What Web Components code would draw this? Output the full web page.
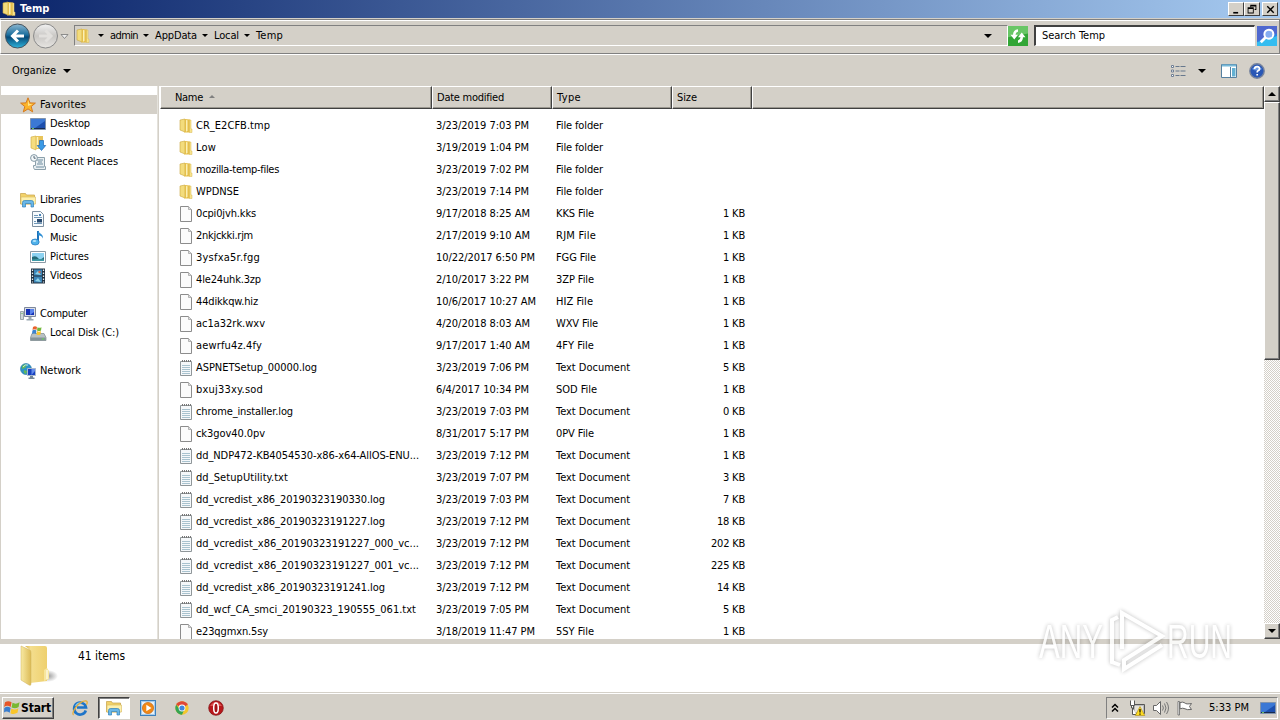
<!DOCTYPE html>
<html lang="en">
<head>
<meta charset="utf-8">
<title>Temp</title>
<style>
  html, body { margin: 0; height: 100%; overflow: hidden; }
  body {
    --face: #d4d0c8;
    --shade: #808080;
    --dark: #404040;
    font-family: 'DejaVu Sans Condensed', 'DejaVu Sans', sans-serif;
    font-stretch: condensed;
    font-size: 11px;
    color: #000;
    background: var(--face);
  }
</style>
</head>
<body>
<explorer-window></explorer-window>
<script>
const ICONS = {
  folder: `<path d="M2 2l5-1v13l-5-2z" fill="#f3dc7c" stroke="#c9a63c" stroke-width=".6"/><path d="M7 1l5 .5v13H6l1-2z" fill="#e5bf4b"/><path d="M8 2l1.5.3v10L8 14z" fill="#fbf0b4"/><path d="M11.500 2h1.500v9h1v3.500h-2.500z" fill="#f7e38d" stroke="#d9b854" stroke-width=".5"/>`,
  file: `<path d="M2.500.500h8l3 3v12h-11z" fill="#fbfbfb" stroke="#8c8c8c"/><path d="M10.500.500v3h3" fill="#ddd" stroke="#a5a5a5" stroke-width=".8"/>`,
  text: `<path d="M2.500 1.500h11v14h-11z" fill="#f5f8fa" stroke="#8f9699"/><path d="M4 1h9" stroke="#777" stroke-width="2" stroke-dasharray="1 1"/><path d="M4 5.500h8M4 7.500h8M4 9.500h8M4 11.500h8M4 13.500h8" stroke="#a9c3cf"/>`,
  star: `<path d="M8 .8l2 5.100 5.400.200-4.200 3.400 1.500 5.400L8 11.900l-4.700 3 1.500-5.400L.6 6.100 6 5.900z" fill="#fcb42b" stroke="#d57a20"/><path d="M8 3l1.200 4 3.300.200L8 9z" fill="#ffe58b"/>`,
  desktop: `<path d="M.5 2.500h15v11H.5z" fill="#1c4fae" stroke="#7f93ad"/><path d="M1 3h14v2L5 12H1z" fill="#3b78d5"/><path d="M1 12.500h14" stroke="#172b50"/><path d="M2 12.500h2" stroke="#6ac15c"/>`,
  downloads: `<path d="M1 2l5-1v14l-5-2z" fill="#f6dd7f" stroke="#cda83e" stroke-width=".6"/><path d="M6 1h7v13H6z" fill="#e8c45b"/><path d="M7.500 2v11" stroke="#fff3b8" stroke-width="1.500"/><path d="M9.500 5.500h4v5h2.200L11.500 15.500 7.200 10.500h2.300z" fill="#3a9ae6" stroke="#1c66b4" stroke-width=".7"/>`,
  recent: `<path d="M5.500 3.500h9v9h1v3H4.500l-1-2v-2h2z" fill="#e8eef1" stroke="#8ca0ab"/><path d="M7 6h6M8 8h4M7 10h6M6 13h8" stroke="#6f8da0"/><circle cx="4" cy="4" r="3.400" fill="#f4f8fa" stroke="#8499a5"/><path d="M4 2v2.200h1.700" fill="none" stroke="#526675"/>`,
  libraries: `<path d="M.5 3V1.500h5l1 1.500h8v9H.500z" fill="#f2d26a" stroke="#c6a147" stroke-width=".7"/><path d="M1 5h14.500v7H1z" fill="#fdf0ad" stroke="#d7b95c" stroke-width=".6"/><path d="M2.500 15v-4.500q0-2 2-2h7q2 0 2 2V15H11v-3.500H5.500V15z" fill="#6ab7e8" stroke="#2f7fb9" stroke-width=".7"/>`,
  documents: `<path d="M2.500.500h8l3 3v12h-11z" fill="#f6fafd" stroke="#7d8fa0"/><path d="M4 4.500h4M4 6.500h8M4 12.500h8M4 10.500h2" stroke="#6f97b8"/><path d="M7 8h5v3.500H7z" fill="#27496f"/><path d="M9 3h2v2H9z" fill="#4b83b8"/>`,
  music: `<path d="M8 1v11" stroke="#1d72ba" stroke-width="2"/><path d="M8 .5c1 3 5.500 3.500 5 8-1-2.500-3-3-5-3z" fill="#2d8ed4"/><ellipse cx="5.200" cy="12" rx="4" ry="3" fill="#50b2ea" stroke="#1d72ba" stroke-width=".7"/><ellipse cx="4.500" cy="11" rx="1.800" ry="1" fill="#b4e3fa"/>`,
  pictures: `<path d="M.5 2.500h15v11H.500z" fill="#fff" stroke="#8b9aa5"/><path d="M2 4h12v8H2z" fill="#8dd2f1"/><path d="M2 8q4-2 6 1t6-1v4H2z" fill="#246b78"/><path d="M2 10.500q6-1 12 0V12H2z" fill="#3f9ba7"/>`,
  videos: `<path d="M1 .5h14v15H1z" fill="#20303f"/><path d="M2.500 1.500v13M13.500 1.500v13" stroke="#e7eef3" stroke-width="1.300" stroke-dasharray="1.500 1.500"/><path d="M4 1.500h8v6H4zM4 8.500h8v6H4z" fill="#3d86b9"/><path d="M5 6l3-3 3 4zM5 13l3-3 3 4z" fill="#8fd3e8"/><circle cx="9.500" cy="4" r="1.200" fill="#d16b4d"/>`,
  computer: `<path d="M.5 5.500h3v8h-3z" fill="#d0d7d9" stroke="#87969c" stroke-width=".8"/><path d="M1.500 7.500h1" stroke="#55b34a"/><path d="M4.500 1.500h11v9h-11z" fill="#d9dee7" stroke="#7d879b"/><path d="M6 3h8v6H6z" fill="#1531b6"/><path d="M10 3h4v3L10 9z" fill="#5a83ec"/><path d="M8.500 11h3v2h2v1.500h-7V13h2z" fill="#9aa8b2"/>`,
  disk: `<path d="M2 8.500h12l2 4v3H.500v-3z" fill="#b9c1c4" stroke="#7c888d" stroke-width=".7"/><path d="M.7 12.500h15v3H.700z" fill="#859399"/><path d="M12 14h2" stroke="#5ee04e"/><path d="M3 2q2-1.500 4 0L6.500 5q-2-1.500-4 0z" fill="#e9622c"/><path d="M7.500 2.200q2 1.300 4 0L11 5.400q-2 1.200-4 0z" fill="#72b83a"/><path d="M2.400 5.600q2-1.500 4 0L6 9q-2-1.500-4 0z" fill="#3a83d0"/><path d="M7 6q2 1.300 4 0l-.5 3.400q-2 1.200-4 0z" fill="#f7c52d"/>`,
  network: `<circle cx="6" cy="6" r="5.500" fill="#2d93c9" stroke="#23749d" stroke-width=".6"/><path d="M2 3q3-3 5-1L5 5 2 6zM4 7l3 1-1 3q-3-1-2-4z" fill="#63b85b"/><path d="M3 4q2-3 5-2" stroke="#bfe8f6" fill="none"/><path d="M7.500 5.500h8v7h-8z" fill="#1740c0" stroke="#a9b8cc"/><path d="M11.500 6h3.500v2l-3.500 4z" fill="#648deb"/><path d="M10 13h3v1.500h1.500V16h-6v-1.500H10z" fill="#758796"/>`,
  views: `<path d="M1.500 2.500h2v2h-2zM1.500 7h2v2h-2zM1.500 11.500h2v2h-2z" fill="#fff" stroke="#6e7e94"/><path d="M5.500 3.500h4m1 0h5M5.500 8h4m1 0h5M5.500 12.500h4m1 0h5" stroke="#67788d"/>`,
  pane: `<path d="M.5 1.500h15v13H.500z" fill="#fff" stroke="#5580a0"/><path d="M1 2.500h14" stroke="#77b9d8" stroke-width="2"/><path d="M9.500 4v10" stroke="#5580a0"/><path d="M11 5h3.500v8.500H11z" fill="#62b0d2"/>`,
  help: `<circle cx="8" cy="8" r="7.200" fill="#2957b6" stroke="#76839d" stroke-width="1.400"/><path d="M3 6q5-6 10 0-5 3-10 0z" fill="#6c9ae2"/><path d="M5.500 6q.3-2.400 2.700-2.300 2.500.2 2.300 2.300-.2 1.200-1.500 1.800-.9.500-.8 1.700M8.200 11v1.600" fill="none" stroke="#fff" stroke-width="1.700"/>`,
  search: `<rect width="16" height="16" fill="#2b83e4"/><path d="M0 0h16v6L0 12z" fill="#4f68cf"/><path d="M0 16v-3l16-5v8z" fill="#35bdf0"/><circle cx="9.500" cy="6.500" r="3.600" fill="#86adf1" stroke="#fff" stroke-width="1.600"/><path d="M7 9l-4 4" stroke="#fff" stroke-width="2.200"/>`,
  refresh: `<rect width="16" height="16" fill="#32a636"/><path d="M0 0h16v6L0 9z" fill="#68c666"/><path d="M2 7h2q0-4 4-4.500v2q-2 .5-2 2.500h2l-3 3.800zM14 9h-2q0 4-4 4.500v-2q2-.5 2-2.500H8l3-3.800z" fill="#fff"/>`,
  flag: `<path d="M0 2.500q3.500-2.500 7 0L6 7.400q-3.500-2.500-7 0z" fill="#e75527"/><path d="M8 3q3.500 2 7.500-.500l-1 5q-3.500 2.400-7.500.500z" fill="#78b833"/><path d="M-.8 8.500q3.500-2.500 6.800 0l-1 5q-3.500-2.500-6-.300z" fill="#397dce"/><path d="M6.800 9q3.500 2.200 7.500-.300l-1 5q-4 2.300-7.500.300z" fill="#f9c52b"/>`,
  ie: `<path d="M13.800 10.500A6 6 0 1 1 14 7.500H5" fill="none" stroke="#1d74c8" stroke-width="2.600"/><path d="M3.500 6q2-3.600 6-3" fill="none" stroke="#7fc6f3" stroke-width="1.200"/><path d="M1.500 15C-1.500 13 7 .500 14 .800q2.200.500.500 4" fill="none" stroke="#e6ad34" stroke-width="1.300"/>`,
  wmp: `<rect x=".5" y=".5" width="15" height="15" fill="#a9cdeb" stroke="#3c80bd"/><rect x="2" y="2" width="12" height="12" fill="#e6f1f9"/><circle cx="8" cy="8" r="5.600" fill="#f18816" stroke="#c96812" stroke-width=".7"/><path d="M6.300 4.700L11.500 8l-5.200 3.300z" fill="#fff"/>`,
  chrome: `<circle cx="8" cy="8" r="6.700" fill="#f3c62d"/><path d="M8 8L2.200 4.700A6.700 6.700 0 0 1 13.800 4.700z" fill="#de4638"/><path d="M2.200 4.700A6.700 6.700 0 0 0 8 14.700L10.500 9 5.500 9z" fill="#35a454"/><circle cx="8" cy="8" r="3.400" fill="#fff"/><circle cx="8" cy="8" r="2.600" fill="#4285dc"/>`,
  opera: `<circle cx="8" cy="8" r="7.300" fill="#b8171b" stroke="#7e1012" stroke-width=".7"/><path d="M2 6q6-8 12 0z" fill="#dd5551"/><ellipse cx="8" cy="8" rx="2.300" ry="5" fill="#a31114" stroke="#fff" stroke-width="1.500"/>`,
  chevrons: `<path d="M5 7.500l3-3 3 3M5 11.500l3-3 3 3" fill="none" stroke="#000" stroke-width="1.500"/>`,
  lan: `<path d="M4.500 4.500h11v9h-11z" fill="#b9b9b9" stroke="#555"/><path d="M6 6h8v6H6z" fill="#e5e2da"/><path d="M1.500.500v5h4v-5M2.500 6v2h2V6M3.500 8v6.500h4" fill="#fff" stroke="#555"/><path d="M11 6.500l4.800 9H6.300z" fill="#ffdc22" stroke="#a98a12" stroke-width=".6"/><path d="M11 9v3.500M11 13.500v1.200" stroke="#000" stroke-width="1.200"/>`,
  sound: `<path d="M.5 5.500h3l4-4v13l-4-4h-3z" fill="#fff" stroke="#666"/><path d="M9.500 5.500q1.800 2.500 0 5M11.500 3.500q3 4.500 0 9M13.500 2q4 6 0 12" fill="none" stroke="#777"/>`,
  action: `<path d="M1 1.500h1.500V15H1z" fill="#fff" stroke="#666" stroke-width=".8"/><path d="M3 2.500q3-1 5 .500 1 1.500 6.500.500l-2 3 2 3q-5 .600-6.500-.700-2-1.200-5 0z" fill="#fff" stroke="#666"/>`,
  min: `<path d="M4 11h6v2H4z"/>`,
  restore: `<path d="M6 3h7v6h-2V8h1V5H7v1H6z"/><path d="M3 6h7v7H3zM4 8v4h5V8z" fill-rule="evenodd"/>`,
  close: `<path d="M4 4l8 8M12 4l-8 8" stroke="#000" stroke-width="1.700"/>`,
};

/* base: clones a template into an open shadow root */
class BaseElement extends HTMLElement {
  connectedCallback() {
    if (this.shadowRoot) return;
    const t = document.createElement('template');
    t.innerHTML = this.render();
    this.attachShadow({ mode: 'open' }).appendChild(t.content.cloneNode(true));
  }
}

class WinIcon extends BaseElement {
  render() {
    const s = this.getAttribute('size') || 16;
    return `
      <style>
        :host { display: block; flex: none; width: ${s}px; height: ${s}px; }
        svg { display: block; overflow: visible; }
      </style>
      <svg width="${s}" height="${s}" viewBox="0 0 16 16">${ICONS[this.getAttribute('name')]}</svg>
    `;
  }
}
customElements.define('win-icon', WinIcon);

/* label whose tracking is adjusted so that it is exactly `w` pixels wide */
class UiLabel extends BaseElement {
  render() {
    return `
      <style>
        :host { display: block; flex: none; white-space: nowrap; line-height: 14px; }
        span { display: inline-block; }
      </style>
      <span><slot></slot></span>
    `;
  }
  connectedCallback() {
    super.connectedCallback();
    const w = Number(this.getAttribute('w'));
    if (!w) return;
    const span = this.shadowRoot.querySelector('span');
    const gap = (w - span.getBoundingClientRect().width) / this.textContent.length;
    span.style.letterSpacing = gap.toFixed(3) + 'px';
  }
}
customElements.define('ui-label', UiLabel);

class DropArrow extends BaseElement {
  render() {
    const s = Number(this.getAttribute('size') || 3);
    return `
      <style>
        :host {
          display: block; flex: none; width: 0; height: 0;
          border: ${s}px solid transparent; border-bottom: 0;
          border-top-color: var(--arrow, #000);
        }
        :host([up]) { border-top: 0; border-bottom: ${s}px solid var(--arrow, #000); }
      </style>
    `;
  }
}
customElements.define('drop-arrow', DropArrow);

class TitleBar extends BaseElement {
  render() {
    return `
      <style>
        :host {
          display: flex; align-items: center; height: 18px; flex: none;
          background: linear-gradient(90deg, #0a246a, #a6caf0);
          color: #fff; font-weight: bold; padding: 0 2px 0 1px;
        }
        ui-label { margin-left: 3px; flex: 1; }
        .btn {
          width: 16px; height: 14px; box-sizing: border-box; background: var(--face);
          border: 1px solid; border-color: #fff var(--dark) var(--dark) #fff;
          display: flex; align-items: center; justify-content: center;
        }
        .btn:last-child { margin-left: 2px; }
      </style>
      <win-icon name="folder"></win-icon>
      <ui-label w="31"><slot></slot></ui-label>
      <div class="btn"><win-icon name="min" size="13"></win-icon></div>
      <div class="btn"><win-icon name="restore" size="14"></win-icon></div>
      <div class="btn"><win-icon name="close" size="13"></win-icon></div>
    `;
  }
  connectedCallback() {
    super.connectedCallback();
  }
}
customElements.define('title-bar', TitleBar);

class NavBar extends BaseElement {
  render() {
    const crumbs = [['admin', 28, 5], ['AppData', 42, 5], ['Local', 25, 5], ['Temp', 27, 5]];
    return `
      <style>
        :host {
          display: flex; align-items: center; height: 35px; flex: none; box-sizing: border-box;
          margin-top: 1px; padding: 0 2px 2px 4px;
          border: 1px solid; border-color: #808080 #808080 #808080 #fff;
          box-shadow: inset 0 1px #fff;
        }
        .hist { flex: none; display: block; }
        drop-arrow { --arrow: #000; }
        .address, .search {
          height: 21px; box-sizing: border-box; display: flex; align-items: center;
          border: 1px solid; border-color: var(--shade) #fff #fff var(--shade);
        }
        .address { flex: 1; margin-left: 5px; padding-left: 0; }
        .crumb { display: flex; align-items: center; gap: 6px; margin-left: 5px; }
        .crumb:first-of-type { margin-left: 7px; }
        .address > .end { margin-left: auto; margin-right: 10px; }
        .refresh { display: flex; margin-right: 5px; }
        .search {
          width: 221px; background: #fff; padding-left: 6px;
          border: 2px solid; border-color: var(--dark) #fff #fff var(--dark);
          border-bottom-width: 1px; border-right-width: 1px;
        }
        .go { margin-left: 2px; }
      </style>
      <svg class="hist" width="64" height="28" viewBox="0 0 64 28">
        <defs>
          <linearGradient id="b" x2="0" y2="1"><stop stop-color="#8db7d0"/><stop offset=".45" stop-color="#1c6f9e"/><stop offset=".55" stop-color="#064b79"/><stop offset="1" stop-color="#2fb5dd"/></linearGradient>
          <linearGradient id="g" x2="0" y2="1"><stop stop-color="#f2f2f2"/><stop offset=".5" stop-color="#c9c7c4"/><stop offset="1" stop-color="#e8e6e2"/></linearGradient>
        </defs>
        <circle cx="12.500" cy="14" r="12" fill="url(#b)" stroke="#47545f"/>
        <path d="M19 14H8M13 8.500L7.500 14l5.500 5.500" fill="none" stroke="#fff" stroke-width="3"/>
        <circle cx="40.500" cy="14" r="12" fill="url(#g)" stroke="#8a8a8a"/>
        <path d="M34 14h11M40.500 8.500L46 14l-5.500 5.500" fill="none" stroke="#e2e0dd" stroke-width="3"/>
        <path d="M56 12.500h7l-3.500 4z" fill="#eee" stroke="#777" stroke-width=".8"/>
      </svg>
      <div class="address">
        <win-icon name="folder"></win-icon>
        ${crumbs.map(([t, w]) => `<div class="crumb"><drop-arrow></drop-arrow><ui-label w="${w}">${t}</ui-label></div>`).join('')}
        <drop-arrow class="end" size="4"></drop-arrow>
        <div class="refresh"></div>
      </div>
      <win-icon name="refresh" size="20"></win-icon>
      <div style="width:6px"></div>
      <div class="search"><ui-label w="63">Search Temp</ui-label></div>
      <win-icon class="go" name="search" size="20"></win-icon>
    `;
  }
}
customElements.define('nav-bar', NavBar);

class CommandBar extends BaseElement {
  render() {
    return `
      <style>
        :host {
          display: flex; align-items: center; height: 32px; flex: none; box-sizing: border-box;
          padding: 0 15px 0 12px; border-top: 1px solid #fff;
        }
        .menu { display: flex; align-items: center; gap: 7px; flex: 1; }
        .tools { display: flex; align-items: center; }
        .tools win-icon:nth-of-type(2) { margin: 0 12px 0 15px; }
        .tools drop-arrow { margin-left: 12px; }
      </style>
      <div class="menu"><ui-label w="44">Organize</ui-label><drop-arrow size="4"></drop-arrow></div>
      <div class="tools">
        <win-icon name="views"></win-icon>
        <drop-arrow size="4"></drop-arrow>
        <win-icon name="pane"></win-icon>
        <win-icon name="help"></win-icon>
      </div>
    `;
  }
}
customElements.define('command-bar', CommandBar);

class NavItem extends BaseElement {
  render() {
    return `
      <style>
        :host { display: flex; align-items: center; gap: 4px; height: 19px; padding-left: 29px; }
        :host([root]) { padding-left: 19px; }
        :host([selected]) { background: var(--face); }
      </style>
      <win-icon name="${this.getAttribute('icon')}"></win-icon>
      <ui-label w="${this.getAttribute('w')}">${this.getAttribute('label')}</ui-label>
    `;
  }
}
customElements.define('nav-item', NavItem);

class NavTree extends BaseElement {
  render() {
    const groups = [
      [['star', 'Favorites', 46], ['desktop', 'Desktop', 40], ['downloads', 'Downloads', 53], ['recent', 'Recent Places', 68]],
      [['libraries', 'Libraries', 41], ['documents', 'Documents', 54], ['music', 'Music', 27], ['pictures', 'Pictures', 39], ['videos', 'Videos', 32]],
      [['computer', 'Computer', 47], ['disk', 'Local Disk (C:)', 69]],
      [['network', 'Network', 41]],
    ];
    return `
      <style>
        :host {
          display: flex; flex-direction: column; gap: 19px; width: 157px; flex: none;
          box-sizing: border-box; padding-top: 9px; background: #fff; border-left: 1px solid var(--face);
        }
      </style>
      ${groups.map((g, n) => `<div>${g.map(([icon, label, w], i) =>
        `<nav-item icon="${icon}" label="${label}" w="${w}"${i ? '' : ' root'}${n + i ? '' : ' selected'}></nav-item>`).join('')}</div>`).join('')}
    `;
  }
}
customElements.define('nav-tree', NavTree);

/* name, name width, date, date width, type, type width, size */
const FILES = [
  ['CR_E2CFB.tmp', 74, '3/23/2019 7:03 PM', 93, 'File folder', 47, ''],
  ['Low', 20, '3/19/2019 1:04 PM', 93, 'File folder', 47, ''],
  ['mozilla-temp-files', 83, '3/23/2019 7:02 PM', 93, 'File folder', 47, ''],
  ['WPDNSE', 43, '3/23/2019 7:14 PM', 93, 'File folder', 47, ''],
  ['0cpi0jvh.kks', 60, '9/17/2018 8:25 AM', 94, 'KKS File', 38, '1 KB'],
  ['2nkjckki.rjm', 57, '2/17/2019 9:10 AM', 94, 'RJM File', 40, '1 KB'],
  ['3ysfxa5r.fgg', 64, '10/22/2017 6:50 PM', 99, 'FGG File', 40, '1 KB'],
  ['4le24uhk.3zp', 65, '2/10/2017 3:22 PM', 93, '3ZP File', 38, '1 KB'],
  ['44dikkqw.hiz', 62, '10/6/2017 10:27 AM', 100, 'HIZ File', 37, '1 KB'],
  ['ac1a32rk.wxv', 69, '4/20/2018 8:03 AM', 94, 'WXV File', 42, '1 KB'],
  ['aewrfu4z.4fy', 66, '9/17/2017 1:40 AM', 94, '4FY File', 38, '1 KB'],
  ['ASPNETSetup_00000.log', 121, '3/23/2019 7:06 PM', 93, 'Text Document', 74, '5 KB'],
  ['bxuj33xy.sod', 67, '6/4/2017 10:34 PM', 93, 'SOD File', 41, '1 KB'],
  ['chrome_installer.log', 97, '3/23/2019 7:03 PM', 93, 'Text Document', 74, '0 KB'],
  ['ck3gov40.0pv', 69, '8/31/2017 5:17 PM', 93, '0PV File', 38, '1 KB'],
  ['dd_NDP472-KB4054530-x86-x64-AllOS-ENU...', 223, '3/23/2019 7:12 PM', 93, 'Text Document', 74, '1 KB'],
  ['dd_SetupUtility.txt', 92, '3/23/2019 7:07 PM', 93, 'Text Document', 74, '3 KB'],
  ['dd_vcredist_x86_20190323190330.log', 189, '3/23/2019 7:03 PM', 93, 'Text Document', 74, '7 KB'],
  ['dd_vcredist_x86_20190323191227.log', 189, '3/23/2019 7:12 PM', 93, 'Text Document', 74, '18 KB'],
  ['dd_vcredist_x86_20190323191227_000_vc...', 223, '3/23/2019 7:12 PM', 93, 'Text Document', 74, '202 KB'],
  ['dd_vcredist_x86_20190323191227_001_vc...', 223, '3/23/2019 7:12 PM', 93, 'Text Document', 74, '225 KB'],
  ['dd_vcredist_x86_20190323191241.log', 189, '3/23/2019 7:12 PM', 93, 'Text Document', 74, '14 KB'],
  ['dd_wcf_CA_smci_20190323_190555_061.txt', 220, '3/23/2019 7:05 PM', 93, 'Text Document', 74, '5 KB'],
  ['e23qgmxn.5sy', 72, '3/18/2019 11:47 PM', 99, '5SY File', 38, '1 KB'],
];

class FileRow extends BaseElement {
  render() {
    const [name, nw, date, dw, type, tw, size] = FILES[this.getAttribute('index')];
    const icon = type === 'File folder' ? 'folder' : type === 'Text Document' ? 'text' : 'file';
    const sw = size && 22 + (size.length - 4) * 6;
    return `
      <style>
        :host { display: grid; grid-template-columns: 258px 120px 120px 69px; align-items: center; height: 22px; padding-left: 18px; flex: none; }
        .name { display: flex; align-items: center; gap: 2px; }
        .size { justify-self: end; }
      </style>
      <div class="name"><win-icon name="${icon}"></win-icon><ui-label w="${nw}">${name}</ui-label></div>
      <ui-label w="${dw}">${date}</ui-label>
      <ui-label w="${tw}">${type}</ui-label>
      ${size && `<ui-label class="size" w="${sw}">${size}</ui-label>`}
    `;
  }
}
customElements.define('file-row', FileRow);

class FileList extends BaseElement {
  render() {
    return `
      <style>
        :host { display: flex; flex-direction: column; flex: 1; background: #fff; overflow: hidden; }
        header { display: flex; height: 23px; flex: none; }
        header div {
          display: flex; align-items: center; gap: 6px; box-sizing: border-box; padding: 1px 0 0 4px;
          background: var(--face); border: 1px solid; border-color: #fff var(--dark) var(--dark) #fff;
          box-shadow: inset -1px -1px #9a978f;
        }
        .rows { padding: 6px 0 0; display: flex; flex-direction: column; }
        drop-arrow { --arrow: #808080; margin-top: -3px; }
      </style>
      <header>
        <div style="width:272px;padding-left:14px"><ui-label w="28">Name</ui-label><drop-arrow up></drop-arrow></div>
        <div style="width:120px"><ui-label w="67">Date modified</ui-label></div>
        <div style="width:120px"><ui-label w="24">Type</ui-label></div>
        <div style="width:80px"><ui-label w="20">Size</ui-label></div>
        <div style="flex:1"></div>
      </header>
      <div class="rows">${FILES.map((f, i) => `<file-row index="${i}"></file-row>`).join('')}</div>
    `;
  }
}
customElements.define('file-list', FileList);

class ScrollBar extends BaseElement {
  render() {
    return `
      <style>
        :host {
          display: flex; flex-direction: column; width: 16px; flex: none;
          background: repeating-conic-gradient(#fff 0 25%, var(--face) 0 50%) 0 0 / 2px 2px;
        }
        div {
          box-sizing: border-box; height: 16px; background: var(--face);
          display: flex; align-items: center; justify-content: center;
          border: 1px solid; border-color: #fff var(--dark) var(--dark) #fff;
          box-shadow: inset -1px -1px var(--shade);
        }
        .thumb { height: 258px; }
        .down { margin-top: auto; }
      </style>
      <div><drop-arrow size="4" up></drop-arrow></div>
      <div class="thumb"></div>
      <div class="down"><drop-arrow size="4"></drop-arrow></div>
    `;
  }
}
customElements.define('scroll-bar', ScrollBar);

class DetailsPane extends BaseElement {
  render() {
    return `
      <style>
        :host {
          display: flex; height: 48px; flex: none; background: #fff; margin-top: 5px;
          padding-left: 18px; gap: 20px;
        }
        svg { flex: none; display: block; }
        ui-label { margin-top: 5px; font-size: 12px; }
      </style>
      <svg width="40" height="48" viewBox="0 0 40 48">
        <defs>
          <linearGradient id="f"><stop stop-color="#f8e9a2"/><stop offset="1" stop-color="#dcbb57"/></linearGradient>
          <linearGradient id="k"><stop stop-color="#d8b44e"/><stop offset=".25" stop-color="#f4de8e"/><stop offset="1" stop-color="#eed06e"/></linearGradient>
          <radialGradient id="s"><stop stop-color="#9b9b9b"/><stop offset="1" stop-color="#fff"/></radialGradient>
        </defs>
        <ellipse cx="30" cy="32" rx="10" ry="6" fill="url(#s)"/>
        <path d="M7 2h20q2 0 2 2v33L12 39V6z" fill="url(#k)"/>
        <path d="M26 26l3-2 2 3v8l-5 2z" fill="#f7e69d"/>
        <path d="M29 26v9" stroke="#fff"/>
        <path d="M3 2l9 4q1 1 1 3v31q0 2-2 1l-8-5z" fill="url(#f)" stroke="#cfb05a" stroke-width=".5"/>
      </svg>
      <ui-label w="47">41 items</ui-label>
    `;
  }
}
customElements.define('details-pane', DetailsPane);

class TaskBar extends BaseElement {
  render() {
    return `
      <style>
        :host {
          display: flex; align-items: center; flex: 1; box-sizing: border-box; padding: 2px 0 0 2px;
          border-top: 1px solid var(--face); box-shadow: inset 0 1px #fff; background: var(--face);
        }
        .start {
          display: flex; align-items: center; gap: 1px; box-sizing: border-box; width: 52px; height: 22px;
          padding-left: 2px; font-weight: bold; font-size: 12px;
          border: 1px solid; border-color: #fff var(--dark) var(--dark) #fff;
          box-shadow: inset -1px -1px var(--shade);
        }
        .apps { display: flex; align-items: center; margin-left: 10px; flex: 1; }
        .apps div { width: 32px; height: 22px; box-sizing: border-box; margin-right: 2px; display: flex; align-items: center; justify-content: center; }
        .apps .open {
          background: #fff; border: 1px solid; border-color: var(--dark) #fff #fff var(--dark);
          box-shadow: inset 1px 1px var(--shade);
        }
        .tray {
          display: flex; align-items: center; box-sizing: border-box; width: 172px; height: 22px; margin-right: 2px;
          border: 1px solid; border-color: var(--shade) #fff #fff var(--shade);
        }
      </style>
      <div class="start"><win-icon name="flag" size="15"></win-icon><ui-label w="30">Start</ui-label></div>
      <div class="apps">
        <div><win-icon name="ie"></win-icon></div>
        <div class="open"><win-icon name="libraries"></win-icon></div>
        <div><win-icon name="wmp"></win-icon></div>
        <div><win-icon name="chrome"></win-icon></div>
        <div><win-icon name="opera"></win-icon></div>
      </div>
      <div class="tray">
        <win-icon name="chevrons"></win-icon>
        <win-icon name="lan" style="margin-left:6px"></win-icon>
        <win-icon name="sound" style="margin-left:8px"></win-icon>
        <win-icon name="action" style="margin-left:8px"></win-icon>
        <ui-label w="40" style="margin-left:16px">5:33 PM</ui-label>
        <win-icon name="desktop" style="margin-left:11px"></win-icon>
      </div>
    `;
  }
}
customElements.define('task-bar', TaskBar);

/* lies over the list and the details pane */
class WaterMark extends BaseElement {
  render() {
    return `
      <style>
        :host { display: block; position: absolute; left: 1030px; top: 602px; pointer-events: none; }
        svg { display: block; filter: drop-shadow(0 0 2px rgba(0,0,0,.3)); opacity: .85; }
        text { font: 48px 'Liberation Sans', sans-serif; fill: #fff; }
      </style>
      <svg width="212" height="78" viewBox="0 0 212 78">
        <text x="9" y="56" textLength="64" lengthAdjust="spacingAndGlyphs">ANY</text>
        <text x="137" y="56" textLength="65" lengthAdjust="spacingAndGlyphs">RUN</text>
        <g fill="none" stroke="#fff" stroke-width="4">
          <path d="M88 15l-6 3v42l8 3"/>
          <path d="M92 47V11l40 23-38 24v9l38-24"/>
        </g>
      </svg>
    `;
  }
}
customElements.define('water-mark', WaterMark);

class ExplorerWindow extends BaseElement {
  render() {
    return `
      <style>
        :host { display: flex; flex-direction: column; width: 1280px; height: 720px; position: relative; overflow: hidden; }
        main { display: flex; height: 553px; flex: none; }
        .split { width: 3px; flex: none; background: linear-gradient(90deg, #e4e2dc 1px, #d4d0c8 1px 2px, #fff 2px); }
        .gap { width: 1px; background: #fff; }
      </style>
      <title-bar>Temp</title-bar>
      <nav-bar></nav-bar>
      <command-bar></command-bar>
      <main>
        <nav-tree></nav-tree>
        <div class="split"></div>
        <file-list></file-list>
        <scroll-bar></scroll-bar>
      </main>
      <details-pane></details-pane>
      <task-bar></task-bar>
      <water-mark></water-mark>
    `;
  }
}
customElements.define('explorer-window', ExplorerWindow);
</script>
</body>
</html>
